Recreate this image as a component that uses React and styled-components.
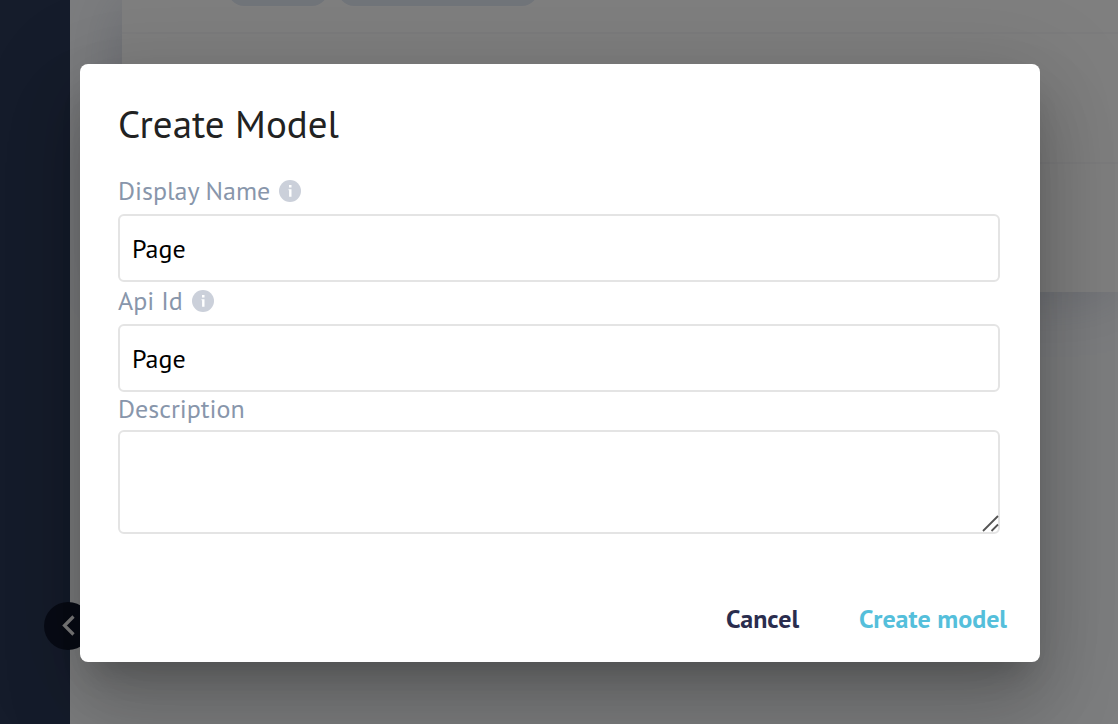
import React from 'react';
import styled, { createGlobalStyle } from 'styled-components';

const GlobalStyle = createGlobalStyle`
  *, *::before, *::after { box-sizing: border-box; }
  html, body { margin: 0; height: 100%; }
  body {
    font-family: "PT Sans", "Noto Sans", sans-serif;
    overflow: hidden;
  }
  #root { height: 100%; }
`;

const Page = styled.div`
  position: relative;
  display: flex;
  min-height: 100vh;
  background: #fafcff;
`;

const Sidebar = styled.aside`
  position: relative;
  z-index: 1;
  flex: 0 0 70px;
  background: #2a3857;
`;

const CollapseButton = styled.button`
  position: absolute;
  right: -22px;
  bottom: 74px;
  display: flex;
  align-items: center;
  justify-content: center;
  width: 48px;
  height: 48px;
  padding: 0;
  border: 0;
  border-radius: 50%;
  background: #10172a;
  color: #fff;
`;

const Content = styled.main`
  flex: 1;
  min-width: 0;
  padding-left: 52px;
`;

const FieldList = styled.div`
  background: #fff;
  box-shadow: 0 2px 60px rgba(50, 60, 110, 0.2);
`;

const FieldRow = styled.div`
  display: flex;
  align-items: flex-end;
  gap: 10px;
  height: ${({ $height }) => $height}px;
  padding: 0 106px 26px;
  overflow: hidden;
  border-bottom: 2px solid #f8f8fa;

  &:last-child { border-bottom: 0; }
`;

const Tag = styled.span`
  flex: none;
  width: ${({ $width }) => $width}px;
  height: 32px;
  border-radius: 16px;
  background: #e3eaf5;
`;

const Backdrop = styled.div`
  position: absolute;
  z-index: 2;
  inset: 0;
  display: flex;
  align-items: center;
  justify-content: center;
  padding: 64px 78px 62px 80px;
  background: rgba(0, 0, 0, 0.5);
`;

const Dialog = styled.form`
  display: flex;
  flex-direction: column;
  width: 100%;
  max-width: 960px;
  padding: 36px 40px 17px 38px;
  border-radius: 8px;
  background: #fff;
  box-shadow:
    0 22px 30px -14px rgba(0, 0, 0, 0.2),
    0 48px 76px 6px rgba(0, 0, 0, 0.14),
    0 18px 92px 16px rgba(0, 0, 0, 0.12);
`;

const Title = styled.h2`
  margin: 0 0 12px;
  color: #222;
  font-size: 39px;
  font-weight: 400;
  line-height: 48px;
`;

const Field = styled.div`
  display: flex;
  flex-direction: column;
`;

const LabelRow = styled.div`
  display: flex;
  align-items: center;
  gap: 9px;
  height: ${({ $compact }) => ($compact ? 38 : 42)}px;
  padding-bottom: 4px;
`;

const Label = styled.label`
  color: #8896ab;
  font-size: 26px;
  line-height: 32px;
`;

const FieldGroup = styled.div`
  display: flex;
  flex-direction: column;
  padding-top: 12px;
`;

const TextInput = styled.input`
  width: 100%;
  height: 68px;
  padding: 0 12px;
  border: 2px solid #e4e4e4;
  border-radius: 6px;
  outline: 0;
  background: #fff;
  color: #000;
  font: inherit;
  font-size: 26px;
`;

const TextAreaFrame = styled.div`
  position: relative;
  display: flex;
`;

const TextArea = styled.textarea`
  width: 100%;
  height: 104px;
  padding: 12px;
  border: 2px solid #e4e4e4;
  border-radius: 6px;
  outline: 0;
  resize: none;
  background: #fff;
  color: #000;
  font: inherit;
  font-size: 26px;
`;

const ResizeGrip = styled.svg`
  position: absolute;
  right: 1px;
  bottom: 2px;
  pointer-events: none;
`;

const Actions = styled.div`
  display: flex;
  justify-content: flex-end;
  gap: 28px;
  margin: 59px -23px 0 0;
`;

const ActionButton = styled.button`
  padding: 10px 16px;
  border: 0;
  background: none;
  color: ${({ $primary }) => ($primary ? '#55bfdb' : '#2a2d4e')};
  font: inherit;
  font-size: 26px;
  font-weight: 700;
  line-height: 32px;
`;

function InfoIcon() {
  return (
    <svg width="22" height="22" viewBox="0 0 22 22" role="img" aria-label="Info">
      <circle cx="11" cy="11" r="11" fill="#cbd0da" />
      <rect x="10" y="5" width="2.500" height="2.500" fill="#fff" />
      <path d="M9.500 9.200h3v7.600h-2.400v-6.600h-.6z" fill="#fff" />
    </svg>
  );
}

export default function App() {
  return (
    <>
      <GlobalStyle />
      <Page>
        <Sidebar>
          <CollapseButton type="button" aria-label="Collapse sidebar">
            <svg width="24" height="24" viewBox="0 0 24 24" fill="none">
              <path d="M17.500 2.500L8.500 11.500L17.500 20.500" stroke="currentColor" strokeWidth="3.200" />
            </svg>
          </CollapseButton>
        </Sidebar>
        <Content>
          <FieldList>
            <FieldRow $height={34}>
              <Tag $width={100} />
              <Tag $width={200} />
            </FieldRow>
            <FieldRow $height={130} />
            <FieldRow $height={128} />
          </FieldList>
        </Content>
        <Backdrop>
          <Dialog role="dialog" aria-labelledby="dialog-title" onSubmit={(e) => e.preventDefault()}>
            <Title id="dialog-title">Create Model</Title>
            <FieldGroup>
              <Field>
                <LabelRow>
                  <Label htmlFor="display-name">Display Name</Label>
                  <InfoIcon />
                </LabelRow>
                <TextInput id="display-name" defaultValue="Page" />
              </Field>
              <Field>
                <LabelRow>
                  <Label htmlFor="api-id">Api Id</Label>
                  <InfoIcon />
                </LabelRow>
                <TextInput id="api-id" defaultValue="Page" />
              </Field>
              <Field>
                <LabelRow $compact>
                  <Label htmlFor="description">Description</Label>
                </LabelRow>
                <TextAreaFrame>
                  <TextArea id="description" />
                  <ResizeGrip width="17" height="17" viewBox="0 0 17 17" fill="none">
                    <path d="M1 16L16 1M9.500 16L16 9.500" stroke="#555" strokeWidth="1.800" />
                  </ResizeGrip>
                </TextAreaFrame>
              </Field>
            </FieldGroup>
            <Actions>
              <ActionButton type="button">Cancel</ActionButton>
              <ActionButton type="submit" $primary>Create model</ActionButton>
            </Actions>
          </Dialog>
        </Backdrop>
      </Page>
    </>
  );
}
